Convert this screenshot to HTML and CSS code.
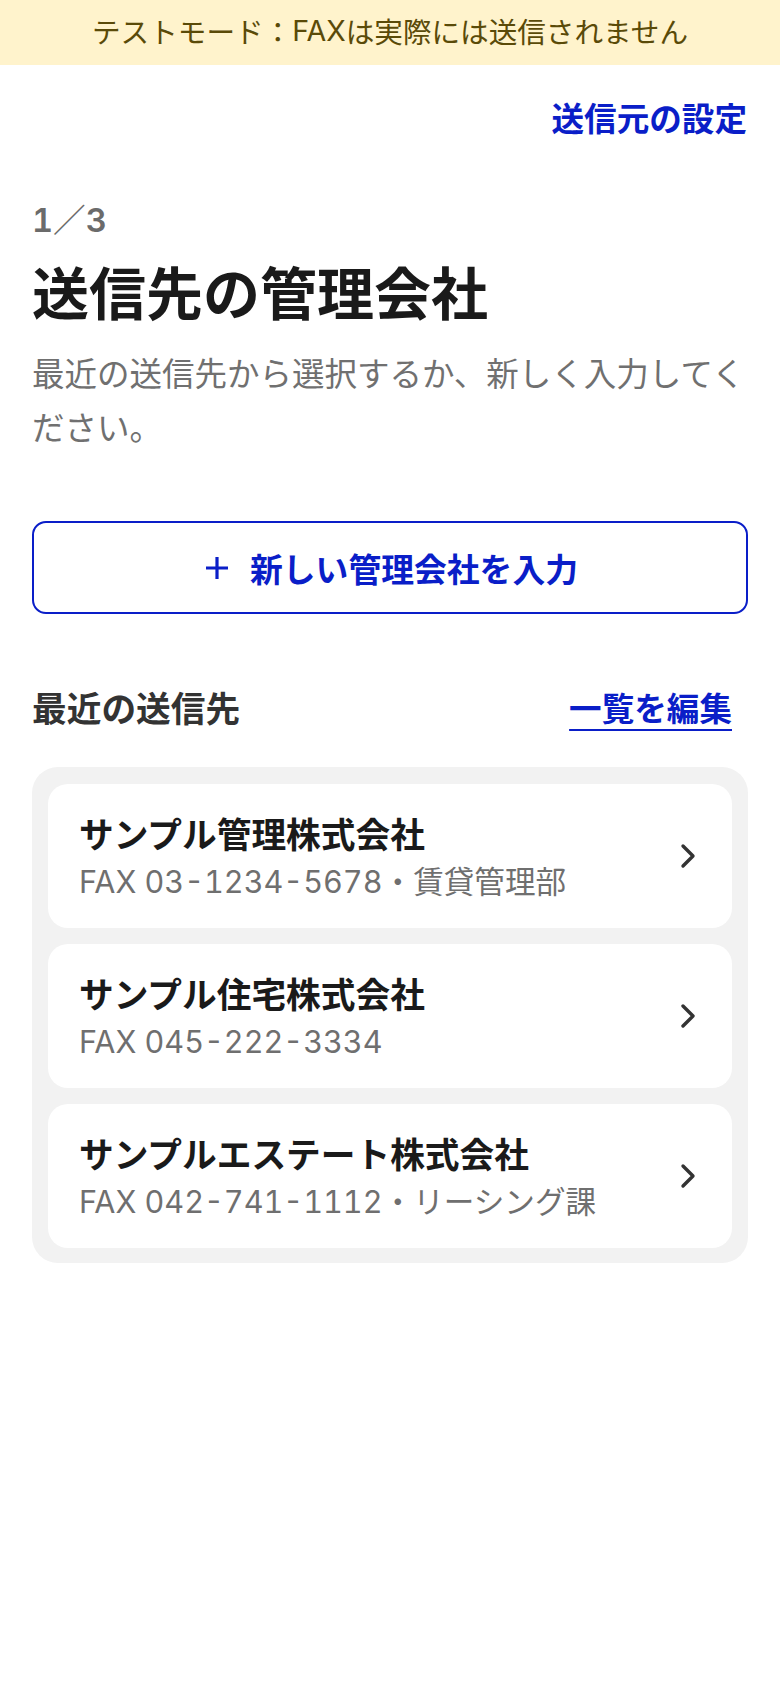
FILE: index.html
```html
<!DOCTYPE html>
<html lang="ja">
<head>
<meta charset="utf-8">
<meta name="viewport" content="width=device-width, initial-scale=1">
<title>送信先の管理会社</title>
<link rel="stylesheet" href="styles.css">
</head>
<body>
<div class="banner">テストモード：<span class="latin">FAX</span>は実際には送信されません</div>
<main class="page">
  <div class="topbar"><a class="sender-link" href="#">送信元の設定</a></div>
  <div class="step"><span class="digit">1</span>／<span class="digit">3</span></div>
  <h1 class="title">送信先の管理会社</h1>
  <p class="desc">最近の送信先から選択するか、新しく入力してください。</p>
  <button class="new-btn" type="button">
    <svg class="plus" width="26" height="26" viewBox="0 0 26 26" aria-hidden="true"><path d="M13 2v22M2 13h22" stroke="currentColor" stroke-width="3.2" fill="none"/></svg>
    <span>新しい管理会社を入力</span>
  </button>
  <div class="section-head">
    <h2 class="section-title">最近の送信先</h2>
    <a class="edit-link" href="#">一覧を編集</a>
  </div>
  <div class="list">
    <a class="card" href="#">
      <div class="card-text">
        <div class="name">サンプル管理株式会社</div>
        <div class="sub"><span class="num">FAX 03-1234-5678</span>・賃貸管理部</div>
      </div>
      <svg class="chev" width="16" height="26" viewBox="0 0 16 26" aria-hidden="true"><path d="M3 3l10 10-10 10" stroke="currentColor" stroke-width="3.4" fill="none" stroke-linecap="round" stroke-linejoin="round"/></svg>
    </a>
    <a class="card" href="#">
      <div class="card-text">
        <div class="name">サンプル住宅株式会社</div>
        <div class="sub"><span class="num">FAX 045-222-3334</span></div>
      </div>
      <svg class="chev" width="16" height="26" viewBox="0 0 16 26" aria-hidden="true"><path d="M3 3l10 10-10 10" stroke="currentColor" stroke-width="3.4" fill="none" stroke-linecap="round" stroke-linejoin="round"/></svg>
    </a>
    <a class="card" href="#">
      <div class="card-text">
        <div class="name">サンプルエステート株式会社</div>
        <div class="sub"><span class="num">FAX 042-741-1112</span>・リーシング課</div>
      </div>
      <svg class="chev" width="16" height="26" viewBox="0 0 16 26" aria-hidden="true"><path d="M3 3l10 10-10 10" stroke="currentColor" stroke-width="3.4" fill="none" stroke-linecap="round" stroke-linejoin="round"/></svg>
    </a>
  </div>
</main>
</body>
</html>
```
FILE: styles.css
```css
* { box-sizing: border-box; }
html, body { margin: 0; padding: 0; background: #ffffff; }
body {
  font-family: "Noto Sans CJK JP", "Noto Sans", sans-serif;
  color: #1a1a1a;
}
.latin, .num, .digit {
  font-family: "Inter", "Noto Sans CJK JP", sans-serif;
}
.banner {
  height: 65px;
  padding-bottom: 4px;
  background: #fff3cc;
  color: #5a4a08;
  font-size: 28.6px;
  display: flex;
  align-items: center;
  justify-content: center;
  white-space: nowrap;
}
.page {
  padding: 0 32px;
}
.topbar {
  display: flex;
  justify-content: flex-end;
  margin-top: 30px;
  padding-right: 1px;
}
.sender-link {
  font-size: 32.6px;
  line-height: 44px;
  font-weight: 700;
  color: #0a1ec8;
  text-decoration: none;
}
.step {
  margin-top: 57px;
  height: 44px;
  font-size: 32.6px;
  line-height: 44px;
  font-weight: 500;
  color: #6b6b6b;
}
.digit {
  font-variant-numeric: tabular-nums;
  font-weight: 600;
}
.title {
  margin: 14px 0 0;
  font-size: 57px;
  line-height: 72px;
  font-weight: 700;
  color: #1a1a1a;
}
.desc {
  margin: 19px -2px 0 0;
  font-size: 32.5px;
  line-height: 54px;
  color: #707070;
}
.new-btn {
  margin-top: 68px;
  width: 100%;
  height: 93px;
  border: 2px solid #0a1ec8;
  border-radius: 14px;
  background: #ffffff;
  color: #0a1ec8;
  display: flex;
  align-items: center;
  justify-content: center;
  gap: 20px;
  font-family: inherit;
  font-size: 32.8px;
  font-weight: 700;
  padding: 0 0 0 2px;
}
.plus { display: block; }
.section-head {
  margin-top: 71px;
  display: flex;
  justify-content: space-between;
  align-items: center;
}
.section-title {
  margin: 0;
  font-size: 34.7px;
  line-height: 44px;
  font-weight: 700;
  color: #333333;
}
.edit-link {
  margin-right: 16px;
  font-size: 32.6px;
  line-height: 44px;
  font-weight: 700;
  color: #0a1ec8;
  text-decoration: underline;
  text-decoration-thickness: 2px;
  text-underline-offset: 8px;
}
.list {
  margin-top: 38px;
  background: #f2f2f2;
  border-radius: 26px;
  padding: 17px 16px 15px;
  display: flex;
  flex-direction: column;
  gap: 16px;
}
.card {
  display: flex;
  align-items: center;
  justify-content: space-between;
  background: #ffffff;
  border-radius: 20px;
  padding: 26px 36px 26px 31px;
  text-decoration: none;
  color: inherit;
}
.name {
  height: 46px;
  font-size: 34.7px;
  line-height: 46px;
  font-weight: 700;
  color: #1a1a1a;
}
.sub {
  margin-top: 2px;
  height: 44px;
  font-size: 30.6px;
  line-height: 44px;
  color: #6f6f6f;
}
.num {
  font-variant-numeric: tabular-nums;
}
.chev {
  display: block;
  color: #333333;
  flex: none;
}
```
